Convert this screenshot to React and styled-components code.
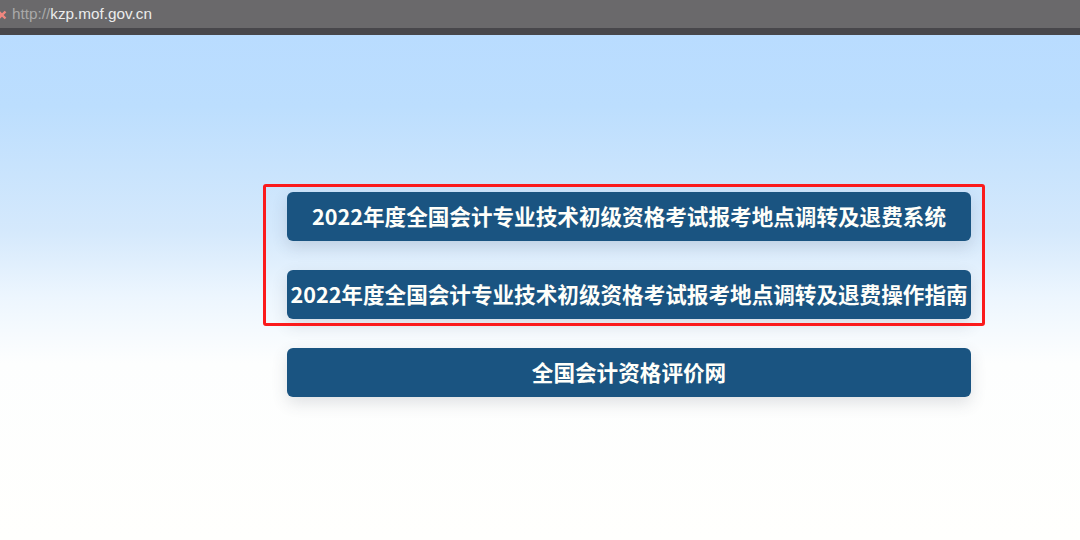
import React from 'react'
import styled, { createGlobalStyle } from 'styled-components'

const GlobalStyle = createGlobalStyle`
    html, body {
        margin: 0;
        padding: 0;
        background: #fffffd;
    }
`

const links = [
    { id: 1, title: '2022年度全国会计专业技术初级资格考试报考地点调转及退费系统' },
    { id: 2, title: '2022年度全国会计专业技术初级资格考试报考地点调转及退费操作指南' },
    { id: 3, title: '全国会计资格评价网' },
]

const App = () => {
    return (
        <Root>
            <GlobalStyle />
            <AddressBar>
                <CloseIcon viewBox="0 0 10 10">
                    <path d="M1.5 1.5 L8.5 8.5 M8.5 1.5 L1.5 8.5" />
                </CloseIcon>
                <Url><Scheme>http://</Scheme>kzp.mof.gov.cn</Url>
            </AddressBar>
            <BottomEdge />
            <Page>
                <ButtonStack>
                    {links.map((link) => (
                        <LinkButton key={link.id}>{link.title}</LinkButton>
                    ))}
                    <RedFrame />
                </ButtonStack>
            </Page>
        </Root>
    )
}

const Root = styled.div`
    display: flex;
    flex-direction: column;
    width: 1080px;
    height: 540px;
    overflow: hidden;
`

const AddressBar = styled.div`
    display: flex;
    align-items: center;
    height: 28px;
    background: #6a696b;
    box-sizing: border-box;
`

const CloseIcon = styled.svg`
    flex: none;
    width: 10px;
    height: 10px;
    margin-left: -3px;
    margin-top: 2px;
    fill: none;
    stroke: #f0877f;
    stroke-width: 2.4;
`

const Url = styled.div`
    margin-left: 5px;
    margin-bottom: 1px;
    font-family: "Liberation Sans", Arial, sans-serif;
    font-size: 15.3px;
    color: #ececec;
    white-space: nowrap;
`

const Scheme = styled.span`
    color: #a9a9a9;
`

const BottomEdge = styled.div`
    height: 7px;
    background: #48474b;
`

const Page = styled.div`
    flex: 1;
    padding: 157px 0 0 287px;
    background: linear-gradient(180deg, #b9dcff 0%, #bcdefe 14%, #d5e9fc 39%, #edf6fe 52%, #fdfefe 65%, #fffffd 100%);
`

const ButtonStack = styled.div`
    position: relative;
    display: flex;
    flex-direction: column;
    gap: 29px;
    width: 684px;
`

const LinkButton = styled.div`
    display: flex;
    align-items: center;
    justify-content: center;
    height: 49px;
    padding-bottom: 3px;
    box-sizing: border-box;
    border-radius: 6px;
    background: #1a5481;
    box-shadow: 0 6px 16px rgba(60, 70, 90, 0.16);
    font-family: "Noto Sans CJK SC", sans-serif;
    font-size: 21.6px;
    font-weight: 700;
    color: #fffffa;
    white-space: nowrap;
`

const RedFrame = styled.div`
    position: absolute;
    left: -24px;
    top: -8px;
    width: 722px;
    height: 142px;
    box-sizing: border-box;
    border: 3px solid #fb1a1c;
    border-radius: 3px;
    pointer-events: none;
`

export default App
